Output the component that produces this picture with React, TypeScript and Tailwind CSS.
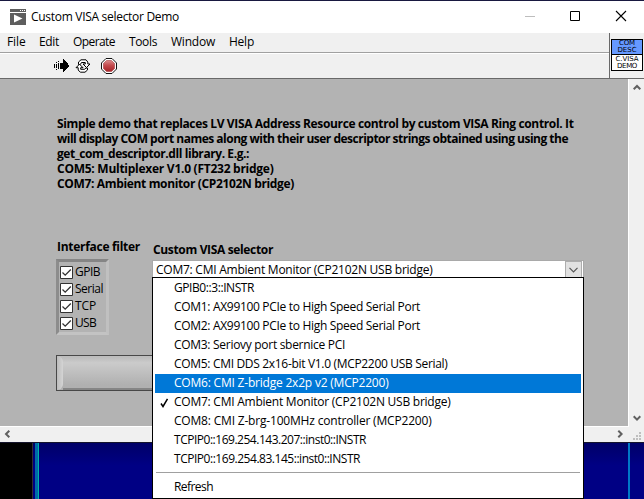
import { useLayoutEffect, useRef } from 'react';

type FitProps = { text: string; width: number; className?: string };

/** A single line of text whose tracking is adjusted so it spans the given width. */
function Fit({ text, width, className = '' }: FitProps) {
  const ref = useRef<HTMLSpanElement>(null);
  useLayoutEffect(() => {
    const el = ref.current;
    if (!el) return;
    el.style.letterSpacing = '0px';
    const natural = el.getBoundingClientRect().width;
    el.style.letterSpacing = `${(width - natural) / text.length}px`;
  }, [text, width]);
  return (
    <span ref={ref} className={`inline-block whitespace-pre ${className}`}>
      {text}
    </span>
  );
}

const menus: [string, number, string][] = [
  ['File', 18.5, 'w-8'],
  ['Edit', 20, 'w-[34px]'],
  ['Operate', 42, 'w-14'],
  ['Tools', 28, 'w-[42px]'],
  ['Window', 44, 'w-[58px]'],
  ['Help', 25, 'w-8'],
];

const description: [string, number][] = [
  ['Simple demo that replaces LV VISA Address Resource control by custom VISA Ring control. It', 516.5],
  ['will display COM port names along with their user descriptor strings obtained using using the', 511],
  ['get_com_descriptor.dll library. E.g.:', 192],
  ['COM5: Multiplexer V1.0 (FT232 bridge)', 216.5],
  ['COM7: Ambient monitor (CP2102N bridge)', 237],
];

const filters: [string, number][] = [
  ['GPIB', 25],
  ['Serial', 28],
  ['TCP', 21],
  ['USB', 21],
];

const items: [string, number][] = [
  ['GPIB0::3::INSTR', 80],
  ['COM1: AX99100 PCIe to High Speed Serial Port', 246],
  ['COM2: AX99100 PCIe to High Speed Serial Port', 246],
  ['COM3: Seriovy port sbernice PCI', 171],
  ['COM5: CMI DDS 2x16-bit V1.0 (MCP2200 USB Serial)', 273.5],
  ['COM6: CMI Z-bridge 2x2p v2 (MCP2200)', 214.5],
  ['COM7: CMI Ambient Monitor (CP2102N USB bridge)', 276.5],
  ['COM8: CMI Z-brg-100MHz controller (MCP2200)', 257.5],
  ['TCPIP0::169.254.143.207::inst0::INSTR', 192],
  ['TCPIP0::169.254.83.145::inst0::INSTR', 186],
];

function TitleBar() {
  return (
    <div className="flex h-8 shrink-0 items-center bg-white pl-[10px]">
      <svg width="16" height="16" viewBox="0 0 16 16" shapeRendering="crispEdges">
        <path d="M0 0h16v16H0z" fill="#5e5e5e" />
        <path d="M0 3h16v1H0zM10 1h1v1h-1zM12 1h1v1h-1zM14 1h1v1h-1z" fill="#fff" />
        <path d="M4 5.5v8l8.5-4z" fill="#fff" shapeRendering="auto" />
      </svg>
      <Fit text="Custom VISA selector Demo" width={148} className="ml-[5px]" />
      <svg className="ml-auto" width="127" height="32" viewBox="0 0 127 32">
        <path d="M8 15.5h10" stroke="#bdbdbd" />
        <path d="M53.5 10.5h9v9h-9z" fill="none" stroke="#000" />
        <path d="M99 10l10 10M109 10L99 20" stroke="#000" strokeWidth="1.1" />
      </svg>
    </div>
  );
}

function Toolbar() {
  return (
    <div className="flex h-[24px] items-center pl-[54px]">
      <svg width="15" height="14" viewBox="0 0 15 14" shapeRendering="crispEdges">
        <path d="M0 5h1v4H0zM2 5h1v4H2zM2 3h1v1H2zM4 4h1v6H4zM4 2h1v1H4zM6 4h3V0h1v1h1v1h1v1h1v1h1v2h1v2h-1v1h-1v1h-1v1h-1v1h-1v1H9v-3H6zM2 10h1v1H2z" fill="#000" />
      </svg>
      <svg className="ml-[6px]" width="16" height="14" viewBox="0 0 16 14" fill="#fff" stroke="#000" strokeWidth="1">
        <path d="M3.500 5.500V3L6 .8h5L12.800 3V5h2.200l-3.500 3.500L8 5h2.300V3.500H6.500L5.300 5.500z" />
        <path d="M12.500 9v2L10 13.200H5.300L3.200 11V8.700H1l3.500-3.500L8 8.700H5.700v1.600h3.800L11 9z" />
      </svg>
      <svg className="ml-[10px]" width="16" height="16" viewBox="0 0 16 16">
        <defs>
          <linearGradient id="stop" x1="0" y1="0" x2="0" y2="1">
            <stop offset="0" stopColor="#d98a8a" />
            <stop offset=".45" stopColor="#c44a4e" />
            <stop offset="1" stopColor="#a82428" />
          </linearGradient>
        </defs>
        <path d="M5 .5h6L15.5 5v6L11 15.5H5L.5 11V5z" fill="#fff" stroke="#111" />
        <path d="M5.500 2.500h5l3 3v5l-3 3h-5l-3-3v-5z" fill="url(#stop)" stroke="#a83c40" strokeWidth=".6" />
      </svg>
    </div>
  );
}

function Header() {
  return (
    <div className="flex h-[46px] shrink-0 border-b border-[#696969] bg-[#f0f0f0]">
      <div className="flex w-[609px] flex-col">
        <div className="flex h-[21px] items-start border-b border-[#a0a0a0] pl-[7px] pt-px">
          {menus.map(([text, width, box]) => (
            <div key={text} className={box}>
              <Fit text={text} width={width} />
            </div>
          ))}
        </div>
        <div className="border-t border-white">
          <Toolbar />
        </div>
      </div>
      <div className="flex-1 border-l border-[#696969] pl-px pt-[6px]">
        <div className="flex h-8 w-8 flex-col border border-black bg-white text-center font-['DejaVu_Sans'] text-[7px] leading-[7px]">
          <div className="flex h-[15px] flex-col items-center border-b border-black bg-[#6699ff]">
            <Fit text="COM" width={16} />
            <Fit text="DESC" width={19} />
          </div>
          <div className="flex flex-col items-center pt-px">
            <Fit text="C.VISA" width={23} />
            <Fit text="DEMO" width={20} />
          </div>
        </div>
      </div>
    </div>
  );
}

function CheckRow({ text, width }: { text: string; width: number }) {
  return (
    <div className="flex h-[17px] items-start">
      <svg className="mt-[2px]" width="13" height="13" viewBox="0 0 13 13">
        <path d="M.5.5h12v12H.5z" fill="#fff" stroke="#333" />
        <path d="M2.500 6.500l2.700 2.700L10.800 3.500" fill="none" stroke="#333" strokeWidth="1.300" />
      </svg>
      <Fit text={text} width={width} className="ml-[2px] leading-4" />
    </div>
  );
}

function FrontPanel() {
  return (
    <div className="flex min-h-0 flex-1">
      <div className="flex flex-1 flex-col border-b border-r border-white bg-[#b3b3b3] pl-14 pt-[37px]">
        <div className="flex flex-col pl-px font-bold leading-[15px]">
          {description.map(([text, width]) => (
            <Fit key={text} text={text} width={width} className="self-start" />
          ))}
        </div>
        <div className="mt-[48px] flex h-[117px]">
          <div className="w-24">
            <div className="h-[20px] pl-px font-bold leading-4">
              <Fit text="Interface filter" width={83} />
            </div>
            <div className="h-[76px] w-[53px] border-[3px] border-b-[#c3c3c3] border-l-[#8c8c8c] border-r-[#c0c0c0] border-t-[#858585] pl-px pt-[2px]">
              {filters.map(([text, width]) => (
                <CheckRow key={text} text={text} width={width} />
              ))}
            </div>
          </div>
          <div className="pt-[3px]">
            <div className="h-[18px] pl-px font-bold leading-4">
              <Fit text="Custom VISA selector" width={120} />
            </div>
            <div className="flex h-[19px] w-[432px] border border-[#a9a9a9] bg-white pl-[3px] pr-px">
              <Fit text="COM7: CMI Ambient Monitor (CP2102N USB bridge)" width={276.5} className="leading-[17px]" />
              <div className="ml-auto flex h-[18px] w-[17px] items-center justify-center border border-[#adadad] bg-[#e1e1e1]">
                <svg width="9" height="6" viewBox="0 0 9 6" fill="none" stroke="#555">
                  <path d="M.5.800l4 4 4-4" strokeWidth="1.200" />
                </svg>
              </div>
            </div>
          </div>
        </div>
        <div className="mt-[-1px] flex h-9 w-[300px] border border-[#484848] bg-linear-to-b from-[#bdbdbd] from-5% via-[#cbcbcb] via-20% to-[#b0b0b0] to-85%">
          <div className="h-full w-[6px] rounded-r-full bg-linear-to-r from-[#bcbcbc] to-[#d4d4d4]" />
          <div className="flex-1 self-end border-b-2 border-[#858585]" />
        </div>
      </div>
      <div className="flex w-[15px] flex-col items-center justify-between bg-[#f0f0f0] pb-[5px] pt-[5px]">
        <svg width="8" height="7" viewBox="0 0 8 7" fill="none" stroke="#606060" strokeWidth="2">
          <path d="M.7 5.300L4 2l3.300 3.300" />
        </svg>
        <svg width="8" height="7" viewBox="0 0 8 7" fill="none" stroke="#606060" strokeWidth="2">
          <path d="M.7 1.300L4 4.600l3.300-3.300" />
        </svg>
      </div>
    </div>
  );
}

function HorizontalScrollbar() {
  return (
    <div className="flex h-[15px] shrink-0 items-center bg-[#f0f0f0] pl-1">
      <svg className="mb-[2px]" width="7" height="8" viewBox="0 0 7 8" fill="none" stroke="#606060" strokeWidth="2">
        <path d="M5.300.7L2 4l3.300 3.300" />
      </svg>
      <svg className="mb-[2px] ml-auto" width="7" height="8" viewBox="0 0 7 8" fill="none" stroke="#606060" strokeWidth="2">
        <path d="M1.300.7L4.600 4 1.300 7.300" />
      </svg>
      <svg className="ml-[9px] mr-[3px] mt-[3px]" width="8" height="8" viewBox="0 0 8 8" fill="#bfbfbf">
        <path d="M6 0h2v2H6zM3 3h2v2H3zM6 3h2v2H6zM0 6h2v2H0zM3 6h2v2H3zM6 6h2v2H6z" />
      </svg>
    </div>
  );
}

function Desktop() {
  return (
    <div className="flex flex-1 border-t border-[#14142c] bg-linear-to-b from-[#000068] to-[#000084] to-40%">
      <div className="w-8 bg-black" />
      <div className="w-px bg-[#303030]" />
      <div className="w-[2px]" />
      <div className="w-[3px] bg-[#006aa8]" />
      <div className="w-px bg-[#00b4a8]" />
      <div className="ml-auto mr-[14px] w-[2px] bg-[#0078c8]" />
    </div>
  );
}

function RingMenu() {
  return (
    <div className="absolute left-[152px] top-[277px] h-[222px] w-[432px] border border-black bg-white px-[2px] pt-px">
      {items.map(([text, width], i) => (
        <div
          key={text}
          className={`flex h-[19px] items-start pt-px ${i === 5 ? 'bg-[#0078d7] text-white' : ''}`}
        >
          <div className="w-[19px] shrink-0 pl-[5px]">
            {i === 6 && (
              <svg className="mt-[4px]" width="9" height="10" viewBox="0 0 9 10" fill="none" stroke="#000">
                <path d="M1 5.500L3 8.500 7.500.8" strokeWidth="1.500" />
              </svg>
            )}
          </div>
          <Fit text={text} width={width} />
        </div>
      ))}
      <div className="mx-px mt-[3px] border-t border-[#a0a0a0]" />
      <div className="mt-[6px] flex h-4 items-start pl-[19px]">
        <Fit text="Refresh" width={39} />
      </div>
    </div>
  );
}

export default function App() {
  return (
    <div className="relative flex h-[499px] w-[644px] flex-col overflow-hidden font-['Open_Sans','Noto_Sans',sans-serif] text-[12px] leading-4 text-black">
      <div className="h-px shrink-0 bg-[#181840]" />
      <div className="flex h-[441px] shrink-0 flex-col">
        <TitleBar />
        <Header />
        <FrontPanel />
        <HorizontalScrollbar />
      </div>
      <Desktop />
      <RingMenu />
    </div>
  );
}
